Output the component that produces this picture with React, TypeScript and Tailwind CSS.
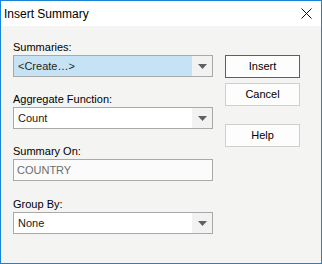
import React from 'react'

function Arrow() {
  return (
    <svg width="9" height="5" viewBox="0 0 9 5" className="block">
      <path d="M0 0H9L4.5 5Z" fill="#606060" />
    </svg>
  )
}

function Combo({ value, selected }: { value: string; selected?: boolean }) {
  return (
    <div className="flex h-[22px] w-[200px] border border-[#a9a9a9] bg-white">
      <div
        className={
          selected
            ? 'flex flex-1 items-center bg-[#c5e3f5] pl-[4px] text-[#262626]'
            : 'flex flex-1 items-center pl-[4px] text-[#1a1a1a]'
        }
      >
        {value}
      </div>
      <div className="flex w-[20px] items-center justify-center bg-[#f2f2f2]">
        <Arrow />
      </div>
    </div>
  )
}

function Field({ label, children, top }: { label: string; children: React.ReactNode; top: string }) {
  return (
    <div className={top}>
      <div className="h-[16px] leading-[16px] text-black">{label}</div>
      {children}
    </div>
  )
}

function Button({ children, focused, className }: { children: React.ReactNode; focused?: boolean; className?: string }) {
  return (
    <div
      className={
        'flex h-[23px] w-[75px] items-center justify-center bg-[#fdfdfd] text-black ' +
        (focused ? 'border border-[#0078d7] ' : 'border border-[#cfcfcf] ') +
        (className ?? '')
      }
    >
      {children}
    </div>
  )
}

export default function App() {
  return (
    <div
      className="flex h-[264px] w-[322px] flex-col border border-[#1883d7] bg-[#f4f4f3] text-[11px]"
      style={{ fontFamily: '"Liberation Sans", Arial, sans-serif' }}
    >
      <div className="flex h-[25px] items-center justify-between bg-white pl-[3px] pr-[9px] text-[12px] text-black">
        <span>Insert Summary</span>
        <svg width="11" height="11" viewBox="0 0 11 11">
          <path d="M0.5 0.5L10.5 10.5M10.5 0.5L0.5 10.5" stroke="#111" strokeWidth="1" />
        </svg>
      </div>
      <div className="flex flex-1 pl-[12px]">
        <div className="flex w-[200px] flex-col pt-[12px]">
          <Field label="Summaries:" top="mt-[1px]">
            <Combo value="<Create…>" selected />
          </Field>
          <Field label="Aggregate Function:" top="mt-[14px]">
            <Combo value="Count" />
          </Field>
          <Field label="Summary On:" top="mt-[14px]">
            <div className="flex h-[22px] w-[200px] items-center border border-[#a9a9a9] bg-[#fbfbfb] pl-[3px] text-[#6d6d6d]">
              COUNTRY
            </div>
          </Field>
          <Field label="Group By:" top="mt-[15px]">
            <Combo value="None" />
          </Field>
        </div>
        <div className="ml-[12px] flex flex-col pt-[29px]">
          <Button focused>Insert</Button>
          <Button className="mt-[5px]">Cancel</Button>
          <Button className="mt-[18px]">Help</Button>
        </div>
      </div>
    </div>
  )
}
